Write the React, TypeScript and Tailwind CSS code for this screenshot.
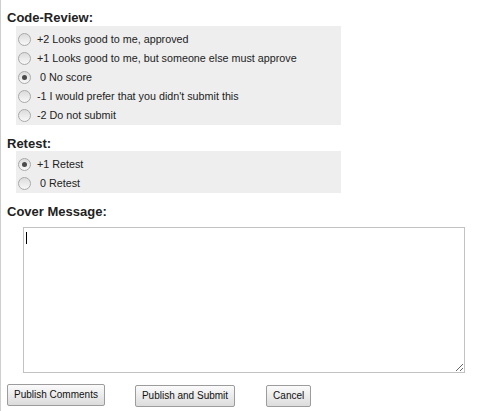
import React from 'react';

type Option = { label: string; checked?: boolean };

const codeReview: Option[] = [
  { label: '+2 Looks good to me, approved' },
  { label: '+1 Looks good to me, but someone else must approve' },
  { label: ' 0 No score', checked: true },
  { label: '-1 I would prefer that you didn\'t submit this' },
  { label: '-2 Do not submit' },
];

const retest: Option[] = [
  { label: '+1 Retest', checked: true },
  { label: ' 0 Retest' },
];

function Radio({ checked }: { checked?: boolean }) {
  return (
    <span className="ml-[2px] flex h-[13px] w-[13px] shrink-0 items-center justify-center rounded-full border border-[#a9a9a9] bg-gradient-to-b from-[#dcdcdc] to-[#f8f8f8]">
      {checked && <span className="h-[5px] w-[5px] rounded-full bg-[#4a4a4a]" />}
    </span>
  );
}

function RadioGroup({ options }: { options: Option[] }) {
  return (
    <div className="ml-[9px] w-[325px] bg-[#eeeeee] pt-[4px]">
      {options.map((o) => (
        <div key={o.label} className="flex h-[19px] items-center">
          <Radio checked={o.checked} />
          <span className="ml-[6px] whitespace-pre text-[10.75px] leading-[13px] text-[#222]">{o.label}</span>
        </div>
      ))}
    </div>
  );
}

function Btn({ children }: { children: React.ReactNode }) {
  return (
    <button className="h-[22px] rounded-[2px] border border-[#9c9c9c] bg-gradient-to-b from-[#fbfbfb] to-[#dcdcdc] px-[6px] text-[10px] leading-[12px] text-[#111]">
      {children}
    </button>
  );
}

export default function App() {
  return (
    <div
      className="h-[411px] w-[482px] border-l border-[#cfcfcf] bg-white pl-[6px]"
      style={{ fontFamily: '"Liberation Sans", Arial, sans-serif' }}
    >
      <div className="pt-[10px] text-[13px] font-bold leading-[15px] text-[#222]">Code-Review:</div>
      <div className="mt-[1px]">
        <RadioGroup options={codeReview} />
      </div>

      <div className="mt-[11px] text-[13px] font-bold leading-[15px] text-[#222]">Retest:</div>
      <RadioGroup options={retest} />

      <div className="mt-[11px] text-[13px] font-bold leading-[15px] text-[#222]">Cover Message:</div>
      <div className="relative ml-[16px] mt-[8px] h-[146px] w-[442px]">
        <textarea className="block h-full w-full resize border border-[#c2c2c2] bg-white p-[2px] text-[11px] outline-none" />
        <span className="absolute left-[3px] top-[5px] h-[12px] w-px bg-black" />
      </div>

      <div className="mt-[9px] flex items-center">
        <Btn>Publish Comments</Btn>
        <div className="ml-[30px]">
          <Btn>Publish and Submit</Btn>
        </div>
        <div className="ml-[31px]">
          <Btn>Cancel</Btn>
        </div>
      </div>
    </div>
  );
}
